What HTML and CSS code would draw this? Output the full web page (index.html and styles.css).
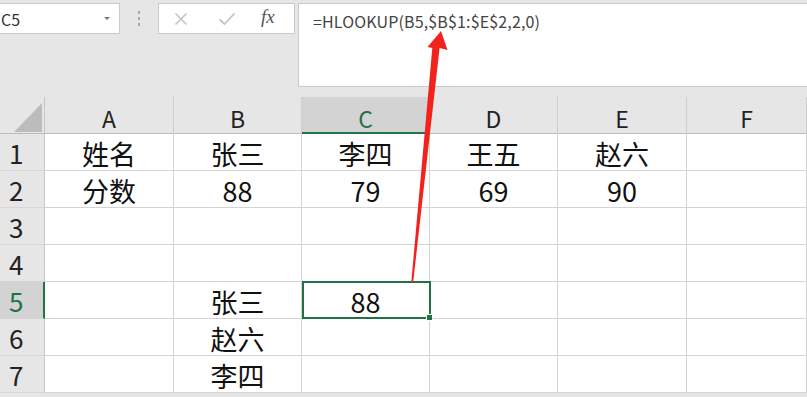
FILE: index.html
```html
<!DOCTYPE html>
<html lang="zh">
<head>
<meta charset="utf-8">
<link rel="stylesheet" href="styles.css">
</head>
<body>
<div class="toolbar">
  <div class="namebox"><span>C5</span><span class="dd"></span></div>
  <div class="sep"><i></i><i></i><i></i></div>
  <div class="fxbox">
    <svg class="ico" width="14" height="14" viewBox="0 0 14 14"><path d="M1.5 1.5 L12.5 12.5 M12.5 1.5 L1.5 12.5" stroke="#c4c4c4" stroke-width="1.6" fill="none"/></svg>
    <svg class="ico" width="18" height="14" viewBox="0 0 18 14"><path d="M1.5 7.5 L6.5 12 L16.5 1.5" stroke="#c4c4c4" stroke-width="1.8" fill="none"/></svg>
    <span class="fx">fx</span>
  </div>
  <div class="formula">=HLOOKUP(B5,$B$1:$E$2,2,0)</div>
</div>
<div class="grid">
  <div class="corner"><svg width="28" height="29" viewBox="0 0 28 29"><polygon points="28,0 28,29 0,29" fill="#bcbcbc"/></svg></div>
  <div class="ch">A</div><div class="ch">B</div><div class="ch sel">C</div><div class="ch">D</div><div class="ch">E</div><div class="ch">F</div>

  <div class="rh">1</div><div class="c">姓名</div><div class="c">张三</div><div class="c">李四</div><div class="c">王五</div><div class="c">赵六</div><div class="c"></div>
  <div class="rh">2</div><div class="c">分数</div><div class="c">88</div><div class="c">79</div><div class="c">69</div><div class="c">90</div><div class="c"></div>
  <div class="rh">3</div><div class="c"></div><div class="c"></div><div class="c"></div><div class="c"></div><div class="c"></div><div class="c"></div>
  <div class="rh">4</div><div class="c"></div><div class="c"></div><div class="c"></div><div class="c"></div><div class="c"></div><div class="c"></div>
  <div class="rh rsel">5</div><div class="c"></div><div class="c">张三</div><div class="c active">88</div><div class="c"></div><div class="c"></div><div class="c"></div>
  <div class="rh">6</div><div class="c"></div><div class="c">赵六</div><div class="c"></div><div class="c"></div><div class="c"></div><div class="c"></div>
  <div class="rh">7</div><div class="c"></div><div class="c">李四</div><div class="c"></div><div class="c"></div><div class="c"></div><div class="c"></div>
</div>
<svg class="arrow" width="807" height="397" viewBox="0 0 807 397">
  <polygon points="411.3,282 413.2,282 439.6,48 447.5,50 441,31 427.5,47 432.3,48" fill="#f2231c"/>
</svg>
</body>
</html>
```

FILE: styles.css
```css
html, body {
  margin: 0;
  padding: 0;
}
body {
  width: 807px;
  height: 397px;
  overflow: hidden;
  position: relative;
  background: #e6e6e6;
  font-family: "Noto Sans CJK SC", "Noto Sans", sans-serif;
  color: #000;
}
.toolbar {
  display: flex;
  align-items: flex-start;
  height: 97px;
  padding-top: 3px;
  box-sizing: border-box;
}
.namebox {
  width: 120px;
  height: 31px;
  box-sizing: border-box;
  background: #fff;
  border: 1px solid #c9c9c9;
  border-left: none;
  display: flex;
  align-items: center;
  justify-content: space-between;
  padding: 0 9px 0 1px;
  font-size: 16px;
  color: #333;
}
.dd {
  width: 0;
  height: 0;
  border-left: 3px solid transparent;
  border-right: 3px solid transparent;
  border-top: 3px solid #777;
}
.sep {
  width: 38px;
  height: 31px;
  display: flex;
  flex-direction: column;
  align-items: center;
  justify-content: center;
  gap: 3px;
}
.sep i {
  width: 2px;
  height: 3px;
  background: #a8a8a8;
}
.fxbox {
  width: 137px;
  height: 31px;
  box-sizing: border-box;
  background: #fff;
  border: 1px solid #c9c9c9;
  display: flex;
  align-items: center;
  padding-left: 15px;
}
.fxbox .ico + .ico {
  margin-left: 30px;
}
.fx {
  margin-left: 25px;
  font-family: "Liberation Serif", serif;
  font-style: italic;
  font-size: 19px;
  color: #555;
  margin-top: -3px;
}
.formula {
  flex: 1;
  margin-left: 3px;
  height: 84px;
  box-sizing: border-box;
  background: #fff;
  border: 1px solid #c9c9c9;
  border-right: none;
  padding: 5px 0 0 14px;
  font-size: 16px;
  color: #444;
  letter-spacing: 0.15px;
}
.grid {
  display: grid;
  grid-template-columns: 45px 129px 128px 128px 128px 129px 120px;
  grid-template-rows: repeat(8, 37px);
}
.grid > div {
  box-sizing: border-box;
}
.corner {
  background: #e6e6e6;
  border-right: 1px solid #c6c6c6;
  border-bottom: 1px solid #bdbdbd;
  display: flex;
  align-items: flex-end;
  justify-content: flex-end;
  padding: 0 2px 1px 0;
}
.corner svg {
  display: block;
}
.ch {
  background: #e6e6e6;
  border-right: 1px solid #cdcdcd;
  border-bottom: 1px solid #bdbdbd;
  display: flex;
  align-items: flex-end;
  justify-content: center;
  padding-bottom: 3px;
  font-size: 23px;
  line-height: 1;
  color: #222;
}
.ch.sel {
  background: #d3d3d3;
  color: #217346;
  border-bottom: 2px solid #217346;
  padding-bottom: 2px;
}
.rh {
  background: #e6e6e6;
  border-right: 1px solid #c6c6c6;
  border-bottom: 1px solid #d6d6d6;
  display: flex;
  align-items: flex-end;
  padding: 0 0 4px 9px;
  font-size: 26px;
  line-height: 1;
  color: #222;
}
.rh.rsel {
  background: #d3d3d3;
  color: #217346;
  border-right: 2px solid #217346;
}
.c {
  background: #fff;
  border-right: 1px solid #d4d4d4;
  border-bottom: 1px solid #d4d4d4;
  display: flex;
  align-items: flex-end;
  justify-content: center;
  padding-bottom: 3px;
  font-size: 27px;
  line-height: 1;
  color: #111;
}
.c.active {
  position: relative;
}
.c.active::before {
  content: "";
  position: absolute;
  left: 0;
  top: -1px;
  right: -2px;
  bottom: -1px;
  border: 2px solid #217346;
}
.c.active::after {
  content: "";
  position: absolute;
  right: -4px;
  bottom: -3px;
  width: 5px;
  height: 5px;
  background: #217346;
  border: 1px solid #fff;
}
.arrow {
  position: absolute;
  left: 0;
  top: 0;
  pointer-events: none;
}
```
